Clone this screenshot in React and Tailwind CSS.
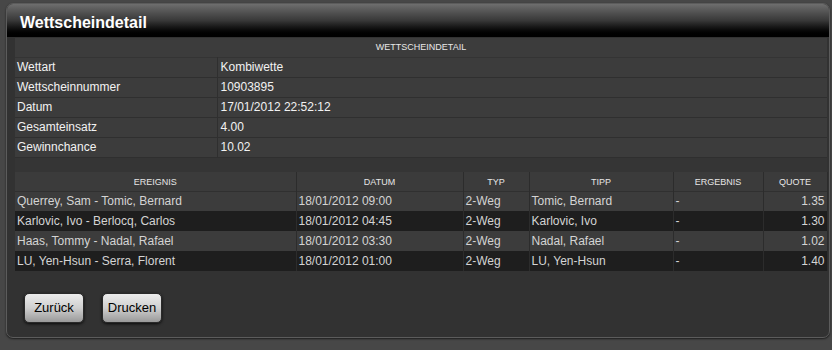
const details = [
  ["Wettart", "Kombiwette"],
  ["Wettscheinnummer", "10903895"],
  ["Datum", "17/01/2012 22:52:12"],
  ["Gesamteinsatz", "4.00"],
  ["Gewinnchance", "10.02"],
]

const events = [
  ["Querrey, Sam - Tomic, Bernard", "18/01/2012 09:00", "2-Weg", "Tomic, Bernard", "-", "1.35"],
  ["Karlovic, Ivo - Berlocq, Carlos", "18/01/2012 04:45", "2-Weg", "Karlovic, Ivo", "-", "1.30"],
  ["Haas, Tommy - Nadal, Rafael", "18/01/2012 03:30", "2-Weg", "Nadal, Rafael", "-", "1.02"],
  ["LU, Yen-Hsun - Serra, Florent", "18/01/2012 01:00", "2-Weg", "LU, Yen-Hsun", "-", "1.40"],
]

const heads = ["EREIGNIS", "DATUM", "TYP", "TIPP", "ERGEBNIS", "QUOTE"]
const widths = ["w-[281px]", "w-[167px]", "w-[66px]", "w-[144px]", "w-[90px]", "w-[64px]"]

function Button({ children }) {
  return (
    <button className="h-[30px] w-[60px] rounded-[5px] border border-[#2a2a2a] bg-gradient-to-b from-[#ececec] via-[#cfcfcf] to-[#9a9a9a] text-[13px] text-black shadow-[0_1px_3px_rgba(0,0,0,0.8)]">
      {children}
    </button>
  )
}

export default function App() {
  return (
    <div className="h-[350px] w-[832px] overflow-hidden bg-[#474747] pt-[3px] pl-[6px] font-['Liberation_Sans',Arial,sans-serif]">
      <div className="w-[824px] h-[335px] overflow-hidden rounded-[7px] border border-[#5c5c5c] bg-[#323232] shadow-[0_1px_2px_rgba(0,0,0,0.6)]">
        <div className="h-[33px] bg-gradient-to-b from-[#6e6e6e] via-[#383838] to-black pl-[13px] pt-[7px] text-[16px] font-bold text-white">
          Wettscheindetail
        </div>

        <div className="pl-[8px] pt-[1px] pr-[2px]">
          <table className="w-[812px] table-fixed border-collapse bg-[#3c3c3c] text-[12px] text-[#f2f2f2]">
            <colgroup>
              <col className="w-[202px]" />
              <col className="w-[610px]" />
            </colgroup>
            <tbody>
              <tr className="h-[19px] border-b border-[#343434]">
                <td colSpan={2} className="pt-[1px] text-center text-[9px] text-[#e8e8e8]">WETTSCHEINDETAIL</td>
              </tr>
              {details.map(([k, v]) => (
                <tr key={k} className="h-[20px] border-b border-[#2f2f2f]">
                  <td className="border-r border-[#2f2f2f] pl-[2px]">{k}</td>
                  <td className="pl-[3px]">{v}</td>
                </tr>
              ))}
              <tr className="h-[15px] bg-[#353535]">
                <td colSpan={2}></td>
              </tr>
            </tbody>
          </table>

          <table className="w-[812px] table-fixed border-collapse text-[12px] text-[#d4d4d4]">
            <colgroup>
              {widths.map((w) => (
                <col key={w} className={w} />
              ))}
            </colgroup>
            <thead>
              <tr className="h-[19px] bg-[#3b3b3b] border-b border-[#303030]">
                {heads.map((h) => (
                  <th key={h} className="border-r border-[#2c2c2c] pt-[2px] text-center text-[9px] font-normal text-[#e6e6e6]">
                    {h}
                  </th>
                ))}
              </tr>
            </thead>
            <tbody>
              {events.map((r, idx) => (
                <tr key={r[0]} className={`h-[20px] ${idx % 2 === 0 ? "bg-[#3c3c3c]" : "bg-[#1e1e1e]"}`}>
                  {r.map((c, i) => (
                    <td
                      key={i}
                      className={`border-r border-[#2c2c2c] ${i === 5 ? "pr-[2px] text-right" : "pl-[2px]"}`}
                    >
                      {c}
                    </td>
                  ))}
                </tr>
              ))}
            </tbody>
          </table>

          <div className="mt-[22px] flex gap-[18px] pl-[9px]">
            <Button>Zurück</Button>
            <Button>Drucken</Button>
          </div>
        </div>
      </div>
    </div>
  )
}
